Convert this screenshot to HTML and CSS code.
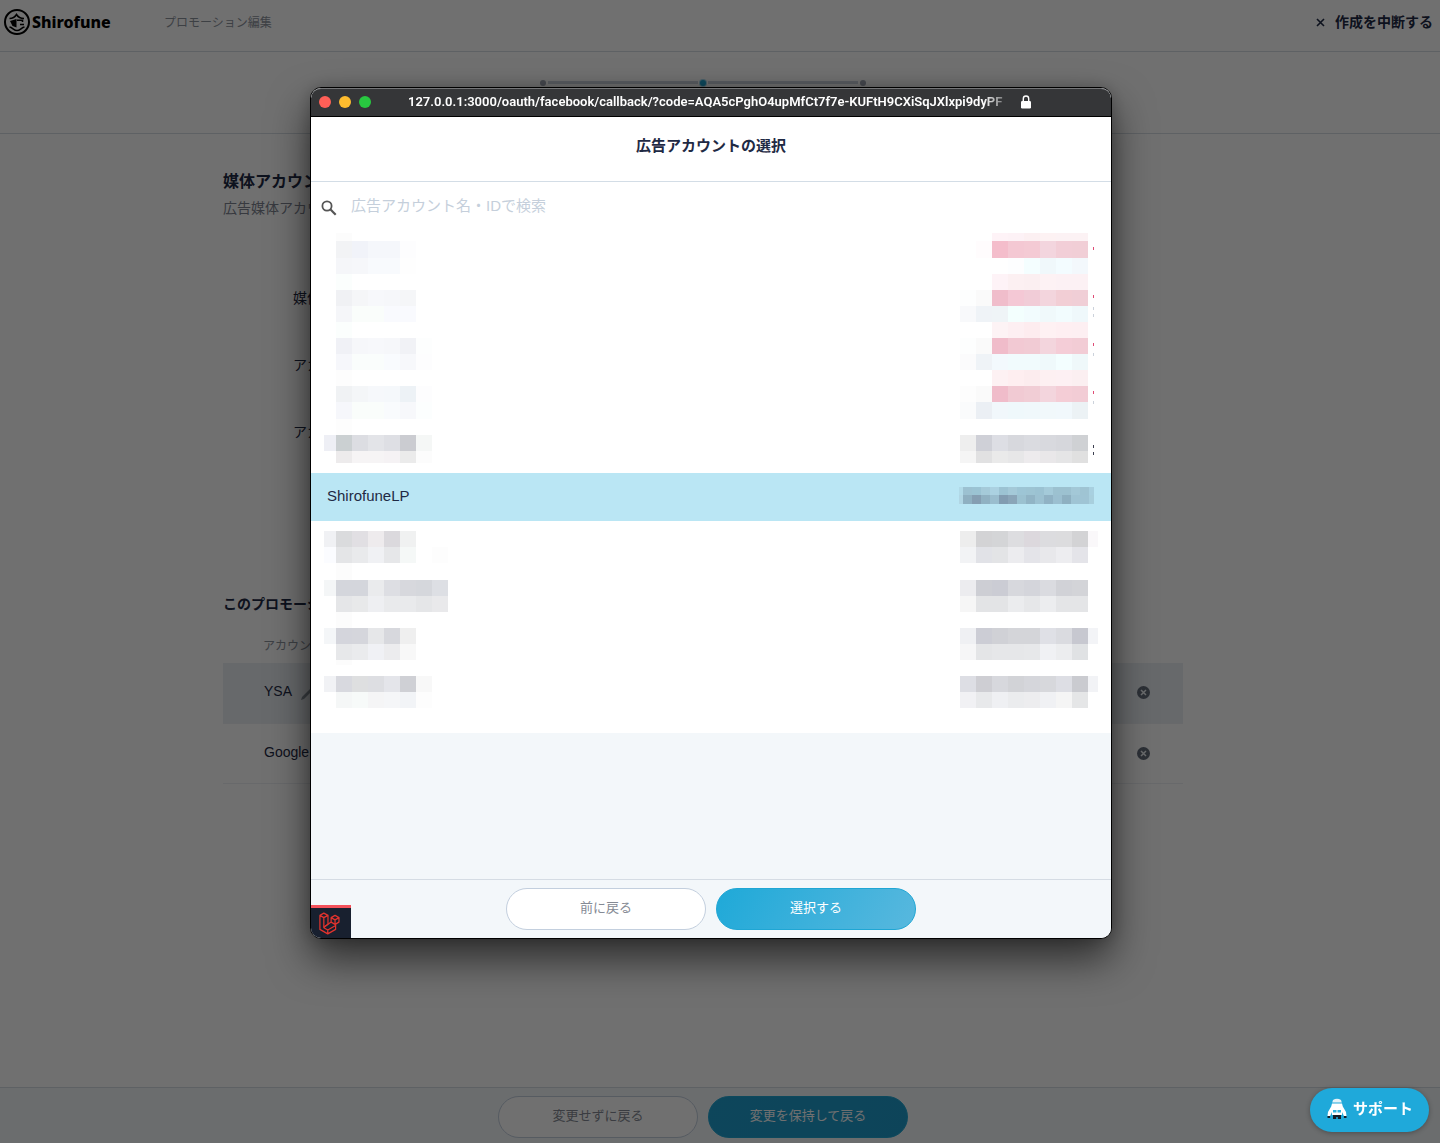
FILE: index.html
```html
<!DOCTYPE html>
<html lang="ja">
<head>
<meta charset="UTF-8" />
<meta name="viewport" content="width=device-width, initial-scale=1.0" />
<title>プロモーション編集 | Shirofune</title>
<link rel="stylesheet" href="styles.css">
</head>
<body>
<div class="page">
<header class="page-header">
    <a href="#" class="logo">
        <svg width="28" height="28" viewBox="0 0 28 28" fill="none" stroke="#000">
            <circle cx="14" cy="14" r="12" stroke-width="2" />
            <path d="M6.500 10.500c3 0 5.500-1.500 7-4 1.500 2.500 4 4 7.500 4" stroke-width="1.500" />
            <path d="M7 13l6.500-2v8.500l-4-1.500z" fill="#000" stroke="none" />
            <path d="M14 12.200h5.500v1.800M17 16.500h4M6.500 19c3 .5 4.500 3.500 7.500 3.500s4.500-3 7.500-3.500" stroke-width="1.600" />
        </svg>
        <span>Shirofune</span>
    </a>
    <p class="page-name">プロモーション編集</p>
    <button type="button" class="abort-button">
        <svg width="9" height="9" viewBox="0 0 9 9" stroke="#1f2a44" stroke-width="1.600"><path d="M1 1l7 7M8 1l-7 7" /></svg>
        <span>作成を中断する</span>
    </button>
</header>

<div class="stepper">
    <span class="step-dot"></span>
    <span class="step-bar"></span>
    <span class="step-dot current"></span>
    <span class="step-bar"></span>
    <span class="step-dot"></span>
</div>

<main class="content">
    <h1>媒体アカウント</h1>
    <p class="lead">広告媒体アカウント</p>
    <ul class="field-names">
        <li>媒体</li>
        <li>アカウント</li>
        <li>アカウント</li>
    </ul>

    <h2>このプロモーション</h2>
    <table class="account-table">
        <thead>
            <tr><th>アカウント</th><th></th></tr>
        </thead>
        <tbody>
            <tr>
                <td>YSA
                    <svg class="pencil" width="12" height="12" viewBox="0 0 12 12" fill="#8a919c"><path d="M0 12l1-3 8-8 2 2-8 8z" /></svg>
                </td>
                <td class="remove-cell">
                    <button type="button" class="remove-button" aria-label="削除">
                        <svg width="13" height="13" viewBox="0 0 13 13"><circle cx="6.500" cy="6.500" r="6.500" fill="#656d7c" /><path d="M4 4l5 5M9 4l-5 5" stroke="#f2f5f8" stroke-width="1.500" /></svg>
                    </button>
                </td>
            </tr>
            <tr>
                <td>Google</td>
                <td class="remove-cell">
                    <button type="button" class="remove-button" aria-label="削除">
                        <svg width="13" height="13" viewBox="0 0 13 13"><circle cx="6.500" cy="6.500" r="6.500" fill="#656d7c" /><path d="M4 4l5 5M9 4l-5 5" stroke="#f2f5f8" stroke-width="1.500" /></svg>
                    </button>
                </td>
            </tr>
        </tbody>
    </table>
</main>

<footer class="page-footer">
    <button type="button" class="button">変更せずに戻る</button>
    <button type="button" class="button primary">変更を保持して戻る</button>
</footer>
</div>

<div class="overlay"></div>

<!-- アカウント選択ウィンドウ -->
<div class="window">
    <div class="title-bar">
        <div class="lights"><i class="red"></i><i class="yellow"></i><i class="green"></i></div>
        <span class="address">127.0.0.1:3000/oauth/facebook/callback/?code=AQA5cPghO4upMfCt7f7e-KUFtH9CXiSqJXlxpi9dyPF</span>
        <svg width="10" height="14" viewBox="0 0 10 14"><path d="M2.300 7V3.700a2.700 2.700 0 0 1 5.400 0V7" fill="none" stroke="#fff" stroke-width="1.400" /><rect y="6" width="10" height="7.500" rx="1.200" fill="#fff" /></svg>
    </div>
    <div class="window-body">
        <h2 class="window-title">広告アカウントの選択</h2>
        <div class="picker">
            <div class="search">
                <svg width="16" height="16" viewBox="0 0 16 16" fill="none" stroke="#555"><circle cx="6" cy="6" r="4.600" stroke-width="1.800" /><path d="M9.300 9.300l5.400 5.400" stroke-width="2.200" /></svg>
                <input type="text" placeholder="広告アカウント名・IDで検索" aria-label="広告アカウント名・IDで検索" />
            </div>
            <ul class="account-list" id="accountList"></ul>
        </div>
        <div class="window-footer">
            <button type="button" class="button">前に戻る</button>
            <button type="button" class="button primary">選択する</button>
        </div>
        <a href="#" class="debugbar" aria-label="Debugbar">
            <svg width="22" height="23" viewBox="0 0 19 20.500" fill="none" stroke="#e2332d" stroke-width="1.100" stroke-linejoin="round">
                <path d="M.5 3L4 1l3.700 2L4 5zM.5 3v12.500l7 4 7-4V11M4 5v9l3.500 2 7-4M7.700 3v8L4 13.500M7.500 16v3.500" />
                <path d="M10.500 5L14 3l3.500 2L14 7zM17.500 5v4L14 11V7M10.500 5v4l3.500 2M10.500 9L4 13.500" />
            </svg>
        </a>
    </div>
</div>

<button type="button" class="support-button">
    <svg width="20" height="22" viewBox="0 0 20 22">
        <path d="M6 2Q10-.6 14 2l.8 2.500H5.200z" fill="#e4f2f8" />
        <path d="M5 5.500h10l.8 3L19 14l.5 4h-2.600L15 14v3H5v-3l-1.900 4H.5L1 14l3.200-5.500z" fill="#fff" />
        <path d="M6 12h3.500v2.500H6zM10.500 12H14v2.500h-3.500z" fill="#2fb4e0" />
        <path d="M6 17h8v4h-3.200v-2H9.200v2H6zM.5 18h2.600v2H.5zM16.900 18h2.600v2h-2.600z" fill="#15202b" />
    </svg>
    <span>サポート</span>
</button>
<script src="script.js"></script>
</body>
</html>
```
FILE: styles.css
```css
* {
    box-sizing: border-box;
}
body {
    margin: 0;
    background-color: #fff;
    color: #1f2a44;
    font-family: "Liberation Sans", "Noto Sans CJK JP", sans-serif;
    font-size: 14px;
    line-height: 20px;
}
h1, h2, p, ul {
    margin: 0;
    padding: 0;
}
ul {
    list-style: none;
}
button, input {
    font-family: inherit;
    color: inherit;
    border: none;
    background: none;
    padding: 0;
}
button {
    cursor: pointer;
}
svg {
    display: block;
    flex: none;
}
.page {
    min-height: 100vh;
    display: flex;
    flex-direction: column;
}
.page-header {
    display: flex;
    align-items: center;
    height: 52px;
    padding: 0 7px 8px 3px;
    border-bottom: 1px solid #d5dce4;
}
.logo {
    display: flex;
    align-items: center;
    gap: 1px;
    width: 161px;
    color: #000;
    font-family: "Noto Sans", sans-serif;
    font-size: 16px;
    font-weight: 800;
    text-decoration: none;
}
.page-name {
    flex: 1;
    padding-top: 2px;
    font-size: 12px;
    color: #8c929c;
}
.abort-button {
    display: flex;
    align-items: center;
    gap: 10px;
    padding-top: 2px;
    font-size: 14px;
    font-weight: bold;
}
.abort-button span {
    padding-bottom: 4px;
}
.stepper {
    display: flex;
    justify-content: center;
    align-items: center;
    gap: 2px;
    height: 82px;
    padding: 0 34px 20px 0;
    border-bottom: 1px solid #d5dce4;
}
.step-dot {
    width: 6px;
    height: 6px;
    border-radius: 50%;
    background-color: #a0a6b4;
}
.step-dot.current {
    background-color: #1fa6d4;
    box-shadow: 0 0 0 1px #a5dcf0;
}
.step-bar {
    width: 150px;
    height: 3px;
    background-color: #ced4e0;
}
.content {
    flex: 1;
    width: 100%;
    max-width: 994px;
    margin: 0 auto;
    padding: 36px 34px 0 0;
}
.content h1 {
    font-size: 16px;
    line-height: 24px;
}
.lead {
    padding-top: 4px;
    color: #7d8390;
}
.field-names {
    display: grid;
    gap: 47px;
    padding: 70px 0 151px 70px;
}
.content h2 {
    font-size: 14px;
    line-height: 22px;
}
.account-table {
    width: 100%;
    border-collapse: collapse;
}
.account-table th {
    height: 48px;
    padding: 14px 0 0 40px;
    font-size: 12px;
    font-weight: normal;
    text-align: left;
    color: #8c929c;
}
.account-table td {
    height: 60px;
    padding: 0 33px 3px 41px;
}
.account-table tbody tr {
    border-bottom: 1px solid #edf0f3;
}
.account-table tbody tr:first-child {
    background-color: #ebf0f4;
}
.pencil {
    display: inline-block;
    margin-left: 6px;
    vertical-align: -4px;
}
.account-table .remove-cell {
    padding-bottom: 0;
}
.remove-button {
    display: block;
    margin-left: auto;
}
.page-footer, .window-footer {
    display: flex;
    justify-content: center;
    gap: 10px;
    padding: 8px 0;
    border-top: 1px solid #d5dce4;
    background-color: #f3f7fa;
}
.page-footer {
    height: 56px;
    padding-right: 34px;
}
.button {
    width: 200px;
    height: 42px;
    padding-bottom: 6px;
    border: 1px solid #c3cfde;
    border-radius: 21px;
    background-color: #fff;
    color: #858a94;
    font-size: 13px;
}
.button.primary {
    border-color: #1fa6d4;
    background: linear-gradient(120deg, #1fa9d8, #58b8de);
    color: #fff;
}
.page-footer .button.primary {
    background: linear-gradient(120deg, #1f9fd0, #1f9ccb);
}
.overlay {
    position: fixed;
    inset: 0;
    background-color: rgba(0, 0, 0, 0.56);
}

/* ポップアップウィンドウ */
.window {
    position: absolute;
    left: 310px;
    top: 87px;
    width: 802px;
    border: 1px solid #000;
    border-radius: 11px;
    overflow: hidden;
    background-color: #f3f7fa;
    box-shadow: 0 20px 40px rgba(0, 0, 0, 0.6), 0 0 16px rgba(0, 0, 0, 0.2);
}
.title-bar {
    display: flex;
    align-items: center;
    height: 29px;
    padding: 0 8px 1px;
    border-top: 1px solid #747577;
    border-bottom: 1px solid #000;
    border-radius: 10px 10px 0 0;
    background-color: #353638;
    color: #fff;
}
.lights {
    display: flex;
    gap: 8px;
    width: 89px;
}
.lights i {
    width: 12px;
    height: 12px;
    border-radius: 50%;
}
.lights .red {
    background-color: #ff5f57;
}
.lights .yellow {
    background-color: #febc2e;
}
.lights .green {
    background-color: #28c840;
}
.address {
    width: 607px;
    margin-right: 6px;
    white-space: nowrap;
    font-family: Roboto, sans-serif;
    font-size: 13px;
    font-weight: 600;
    -webkit-mask-image: linear-gradient(to left, transparent, #000 32px);
    mask-image: linear-gradient(to left, transparent, #000 32px);
}
.window-body {
    position: relative;
    display: flex;
    flex-direction: column;
    min-height: 821px;
}
.window-title {
    height: 65px;
    padding-top: 19px;
    border-bottom: 1px solid #d3dde6;
    background-color: #fff;
    font-size: 15px;
    text-align: center;
}
.picker {
    flex: 1;
}
.search {
    display: flex;
    align-items: center;
    gap: 14px;
    height: 51px;
    padding: 0 10px;
    background-color: #fff;
}
.search input {
    flex: 1;
    height: 32px;
    padding-bottom: 4px;
    font-size: 15px;
    outline: none;
}
.search input::placeholder {
    color: #c5cfdb;
    opacity: 1;
}
.account-list {
    padding-bottom: 20px;
    background-color: #fff;
}
.account-item {
    display: flex;
    justify-content: space-between;
    width: 100%;
    height: 48px;
    padding: 0 13px 0 16px;
    font-size: 15px;
    line-height: 46px;
}
.account-item.selected {
    background-color: #bae6f4;
}
.account-item svg {
    overflow: visible;
}
.debugbar {
    position: absolute;
    left: 0;
    bottom: 0;
    width: 40px;
    height: 33px;
    padding: 4px 8px;
    border-top: 3px solid #f4525b;
    background-color: #18202f;
}
.support-button {
    position: fixed;
    right: 11px;
    bottom: 11px;
    display: flex;
    align-items: center;
    gap: 6px;
    height: 44px;
    padding: 0 16px 2px 17px;
    border-radius: 22px;
    background-color: #1fa9da;
    box-shadow: 0 1px 5px rgba(0, 0, 0, 0.3);
    color: #fff;
    font-size: 15px;
    font-weight: bold;
}
.support-button span {
    padding-bottom: 4px;
}
```
FILE: script.js
```js
// 伏せ字モザイク: [y, 高さ, 各セルの色]
const leftX = [-3, 9, 25, 41, 57, 73, 89, 105, 121];
const rightX = [0, 16, 32, 48, 64, 80, 96, 112, 128, 138];
// 選択行の右側は細かいセル
const fineX = [-1, 3, 12, 21, 30, 39, 48, 57, 66, 75, 84, 93, 102, 111, 120, 129, 134];

const accounts = [
    {
        left: [[0, 8, '- #fcfcfc'], [8, 17, '- #f2f3f5 #f1f3f9 #f5f7fb #f5f7fb #fdfdfe'], [25, 16, '- #f5f6f9 #f6f7fa #f8fafd #f8fafd #fefefe'], [41, 7, '- #fbfefd']],
        right: [[0, 8, '- - #fef3f7 #fdf2f6 #fcf0f2 #fdf2f3 #fcf2f4 #fcf2f4'], [8, 17, '- #fffcfd #f4bdcb #f4c8d3 #f4cad4 #f3d5de #f2ced7 #f1ced6'], [25, 16, '- - - #fdfeff #f4feff #f0f8fb #f3fcff #f3f8fc'], [41, 7, '- - #fef3f7 #fcf0f2 #fbeff1 #fdf2f4 #fcf1f4 #fcf1f4']],
        specks: [[14, '#df4c75']]
    },
    {
        left: [[0, 9, '- #fbfefd'], [9, 16, '- #f0f1f4 #f5f6f8 #f7f8fb #f6f7fa #f5f6f8'], [25, 16, '- #f5f6f9 #fafdfb #fafdfb #f9fafe #f9fafe'], [41, 7, '- #fbfefd']],
        right: [[0, 9, '- - #fef3f7 #fcf0f2 #fbeff1 #fdf2f4 #fcf1f4 #fcf1f4'], [9, 16, '#fdfefe #fafafa #f0bdcb #f4c8d5 #f1ccd7 #f3d5dd #f2ced5 #f0ced6'], [25, 16, '#f8f9fb #eff3f7 #eff4f7 #f3fffe #f2fcfe #f0f9fb #f2fcfe #eff8fb'], [41, 7, '- - #fdf3f5 #fdeff2 #fdecef #fef1f3 #feeff2 #fdeff2']],
        specks: [[14, '#df4c75'], [26, '#ccd2db'], [33, '#ccd2db']]
    },
    {
        left: [[0, 9, '- #fbfefd'], [9, 16, '- #f0f1f6 #f6f7fa #f7f8fb #f6f7fa #f1f2f6 #fdfefe'], [25, 16, '- #f6f7fb #fafdfc #fafdfc #f9fbfe #f7f8fb #fdfdfe'], [41, 7, '- #fdfdfd']],
        right: [[0, 9, '- - #fdf3f5 #fdeff2 #fdecef #fef1f3 #feeff2 #fdeff2'], [9, 16, '#fdfefe #fafafa #f0bcca #f2c9d3 #f1cbd4 #f3d5dd #f4cdd7 #f2ccd5'], [25, 16, '#fbfbfc #eff3f7 #f3f9fd #f1fbfd #f1fbfd #eff9fb #f3feff #eff8fa'], [41, 7, '- - #fdf1f3 #feeef0 #fcecee #fdf0f2 #fdf0f3 #fbeff1']],
        specks: [[14, '#df4c75'], [24, '#ccd2db']]
    },
    {
        left: [[0, 9, '- #fdfdfd'], [9, 16, '- #f0f2f4 #f4f6f8 #f6f8fb #f5f8fb #edf2f6 #fdfdfe'], [25, 17, '- #f6f7fb #fafdfb #fafdfb #f9fbfd #f7f8fb #fcfefe'], [42, 6, '- #fdfdfd']],
        right: [[0, 9, '- - #fdf1f3 #feeef0 #fcecee #fdf0f2 #fdf0f3 #fbeff1'], [9, 16, '#fdfdfd #fafafa #f0bcca #f1cad3 #f1cdd5 #f3d5dd #f4cdd6 #f2ccd5'], [25, 17, '#fafbfc #ebeff4 #f1f7fb #eff8fb #f0f8fb #f1f8fb #f1f8fc #ecf2f5']],
        specks: [[14, '#df4c75'], [24, '#ccd2db']]
    },
    {
        left: [[0, 10, '- #fdfdfd'], [10, 16, '#eeeff5 #cbd0d2 #dcdde2 #e3e4e8 #dedfe4 #cbccd1 #f5f7f6'], [26, 12, '- #edebec #f6f4f5 #f6f4f5 #f5f2f4 #ebebeb #fcfcfc']],
        right: [[10, 16, '#eeeeee #cfd0d7 #dddee4 #d7d8dd #dadbe0 #d8d9de #d6d7dc #cfd1d4'], [26, 12, '#f5f5f5 #e1e1e2 #eaeaea #e7e7e8 #edebed #e9e7e9 #e5e5e6 #e0e0e0']],
        specks: [[20, '#3c3f50'], [27, '#3c3f50']]
    },
    {
        name: 'ShirofuneLP',
        fine: [[14, 8, '#b1dae8 #9cc1d1 #9bc3d3 #a5cad9 #abd1e1 #9cc3d3 #a4c9d8 #9dc5d5 #9dc4d3 #9bc2d2 #a4cad9 #9cc1d0 #9cc1d0 #a3c8d7 #9fc4d3 #a8d0e0'], [22, 9, '#b1d6e4 #8fb0c1 #859eb2 #90b1c2 #9abdce #829cb1 #8aa5b8 #9bc1d0 #91b4c5 #9cc1d1 #90b2c4 #9bbfd0 #8eb0c1 #9fc4d4 #9fc4d4 #a8cfdd']]
    },
    {
        left: [[10, 16, '#f0f1f4 #dadbdd #e1dfe3 #eeebed #dbd9dd #f0f1f1'], [26, 16, '#fbfcff #e4e5e7 #e9eaec #f0f1f4 #e6e7e9 #f5f8f7 - #fdfdfd'], [42, 6, '- #fcfcfc']],
        right: [[10, 16, '#ededed #d3d3d5 #d4d5d7 #dddde0 #dcd8dd #dcdcdf #dcdcde #d3d3d5 #faf8fa'], [26, 16, '#f2f3f5 #e1e2e7 #e3e4e6 #ececef #e4e4e9 #e8e8eb #ededf0 #e4e4e9']]
    },
    {
        left: [[0, 11, '- #fcfcfc'], [11, 16, '#f4f6f7 #d4d6dc #d4d6dc #eaebed #dddee3 #d7d8dd #d5d7dc #dddfe4'], [27, 16, '- #e5e6e8 #e8e9ea #eeeff2 #e9eaec #e9eaec #e5e6e8 #e9e9eb'], [43, 5, '- #fcfcfc']],
        right: [[11, 16, '#ececef #cdced4 #cbccd4 #d7d8dd #d4d5db #dadbe0 #d1d2d7 #d3d4d8'], [27, 16, '#f6f6f6 #e3e4e6 #e3e4e6 #ebecee #e6e7e9 #ecedef #e4e5e7 #e4e5e7']]
    },
    {
        left: [[0, 11, '- #fcfcfc'], [11, 16, '#f4f6f8 #d4d5dc #d5d6dc #e6e7e9 #d7d8dd #efefef'], [27, 16, '- #e7e8ea #eaebed #f0f1f5 #ececee #f8f8f8'], [43, 5, '- #fcfcfc']],
        right: [[11, 16, '#eff0f3 #cccdd5 #d0d1d6 #d4d5d9 #d4d5d9 #dfe0e6 #dadbe0 #c7c8d0 #f3f4f7'], [27, 16, '#f6f6f7 #e4e5e7 #e6e7e9 #e6e7e9 #e7e8ea #f0f1f4 #ecedef #e0e2e4']]
    },
    {
        left: [[11, 16, '#f1f2f5 #d8d9df #dedfe0 #dddee2 #e4e5ea #cfd0d5 #f8f8f8'], [27, 16, '- #f5f7f7 #f7faf9 #f5f5f6 #f5f6f8 #f2f4f7 #fdfdfd']],
        right: [[11, 16, '#dddee4 #ceced3 #d7d8dd #d2d3d7 #d5d6db #d7d8dc #dddee4 #cacbd0 #f2f3f6'], [27, 16, '#f1f1f4 #e8e9eb #eff0f3 #ebecee #ededef #f0f1f4 #f5f5f5 #e5e6e7']]
    }
];

function mosaic(bands, xs, width, specks = []) {
    let rects = '';
    bands.forEach(([y, h, colors]) => {
        colors.split(' ').forEach((color, i) => {
            if (color === '-') return;
            rects += `<rect x="${xs[i]}" y="${y}" width="${xs[i + 1] - xs[i]}" height="${h}" fill="${color}" />`;
        });
    });
    specks.forEach(([y, color]) => {
        rects += `<rect x="133" y="${y}" width="1" height="3" fill="${color}" />`;
    });
    return `<svg width="${width}" height="48" aria-hidden="true" shape-rendering="crispEdges">${rects}</svg>`;
}

document.getElementById('accountList').innerHTML = accounts.map(account => {
    const name = account.name ? `<span>${account.name}</span>` : mosaic(account.left, leftX, 121);
    const id = account.fine ? mosaic(account.fine, fineX, 138) : mosaic(account.right, rightX, 138, account.specks);
    const selected = account.name ? ' selected' : '';
    const label = account.name || 'アカウント';
    return `<li><button type="button" class="account-item${selected}" aria-label="${label}">${name}${id}</button></li>`;
}).join('');
```
